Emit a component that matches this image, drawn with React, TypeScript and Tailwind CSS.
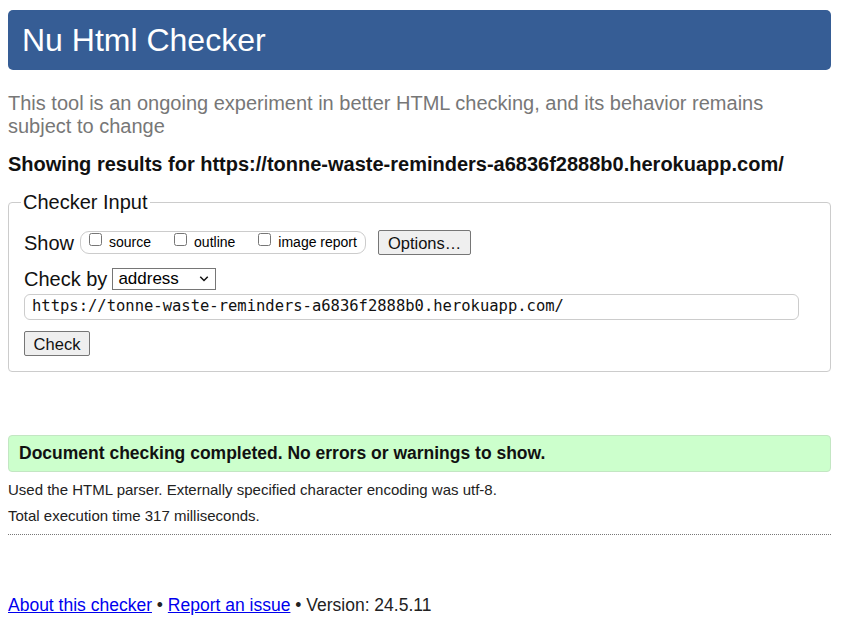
import React from "react";

const sans = { fontFamily: '"Liberation Sans", Arial, sans-serif' };

const ShowBox = () => (
  <span className="ml-[6px] inline-flex h-[23px] items-center rounded-[9px] border border-[#ccc] pr-[8px] pl-[8px] text-[14px]">
    {["source", "outline", "image report"].map((label, i) => (
      <label key={label} className={`flex items-center ${i > 0 ? "ml-[23px]" : ""}`}>
        <input type="checkbox" className="mr-[7px] -mt-[6px] h-[13px] w-[13px]" />
        {label}
      </label>
    ))}
  </span>
);

export default function App() {
  return (
    <div className="min-h-[624px] bg-white pt-[10px] pr-[15px] pl-[8px] text-[#000]" style={sans}>
      <h1 className="flex h-[60px] items-center rounded-[5px] bg-[#365d95] px-[14px] pb-[1px] text-[32px] leading-none text-white">
        Nu Html Checker
      </h1>

      <p className="mt-[22px] text-[20px] leading-[23px] text-[#777]">
        This tool is an ongoing experiment in better HTML checking, and its behavior remains
        <br />
        subject to change
      </p>

      <p className="mt-[15px] text-[20px] leading-[23px] font-bold text-[#111]">
        Showing results for https://tonne-waste-reminders-a6836f2888b0.herokuapp.com/
      </p>

      <fieldset className="mt-[15px] rounded-[4px] border border-[#ccc] px-[15px] pb-[14px]">
        <legend className="-ml-[3px] px-[2px] text-[20px] leading-[23px] text-[#111]">
          Checker Input
        </legend>

        <div className="mt-[16px] flex h-[25px] items-center text-[20px]">
          <span className="text-[#111]">Show</span>
          <ShowBox />
          <button className="ml-[12px] h-[25px] rounded-[2px] border border-[#767676] bg-[#efefef] px-[9px] text-[16.5px] text-[#111]">
            Options…
          </button>
        </div>

        <div className="mt-[13px] flex h-[22px] items-center text-[20px]">
          <span className="text-[#111]">Check by</span>
          <span className="relative ml-[5px] flex h-[22px] w-[104px] items-center border border-[#767676] bg-white pl-[5px] text-[17px]">
            address
            <svg
              viewBox="0 0 12 8"
              className="absolute top-[7px] right-[6px] h-[6px] w-[10px]"
              fill="none"
              stroke="#111"
              strokeWidth="2"
            >
              <path d="M1 1l5 5 5-5" />
            </svg>
          </span>
        </div>

        <div
          className="mt-[4px] flex h-[26px] w-[775px] items-center rounded-[6px] border border-[#ccc] px-[7px] text-[15.5px] text-[#111]"
          style={{ fontFamily: '"DejaVu Sans Mono", monospace' }}
        >
          https://tonne-waste-reminders-a6836f2888b0.herokuapp.com/
        </div>

        <button className="mt-[11px] h-[25px] w-[66px] rounded-[2px] border border-[#767676] bg-[#efefef] text-[16.5px] text-[#111]">
          Check
        </button>
      </fieldset>

      <div className="mt-[63px] flex h-[37px] items-center rounded-[4px] border border-[#c3e6c3] bg-[#ccffcc] px-[10px] text-[17.5px] font-bold text-[#111]">
        Document checking completed. No errors or warnings to show.
      </div>

      <p className="mt-[9px] text-[15px] leading-[18px] text-[#222]">
        Used the HTML parser. Externally specified character encoding was utf-8.
      </p>
      <p className="mt-[8px] text-[15px] leading-[18px] text-[#222]">
        Total execution time 317 milliseconds.
      </p>

      <hr className="mt-[9px] border-0 border-t border-dotted border-[#777]" />

      <p className="mt-[60px] text-[17.5px] leading-[20px] text-[#222]">
        <a href="#" className="text-[#00e] underline">About this checker</a> •{" "}
        <a href="#" className="text-[#00e] underline">Report an issue</a> • Version: 24.5.11
      </p>
    </div>
  );
}
